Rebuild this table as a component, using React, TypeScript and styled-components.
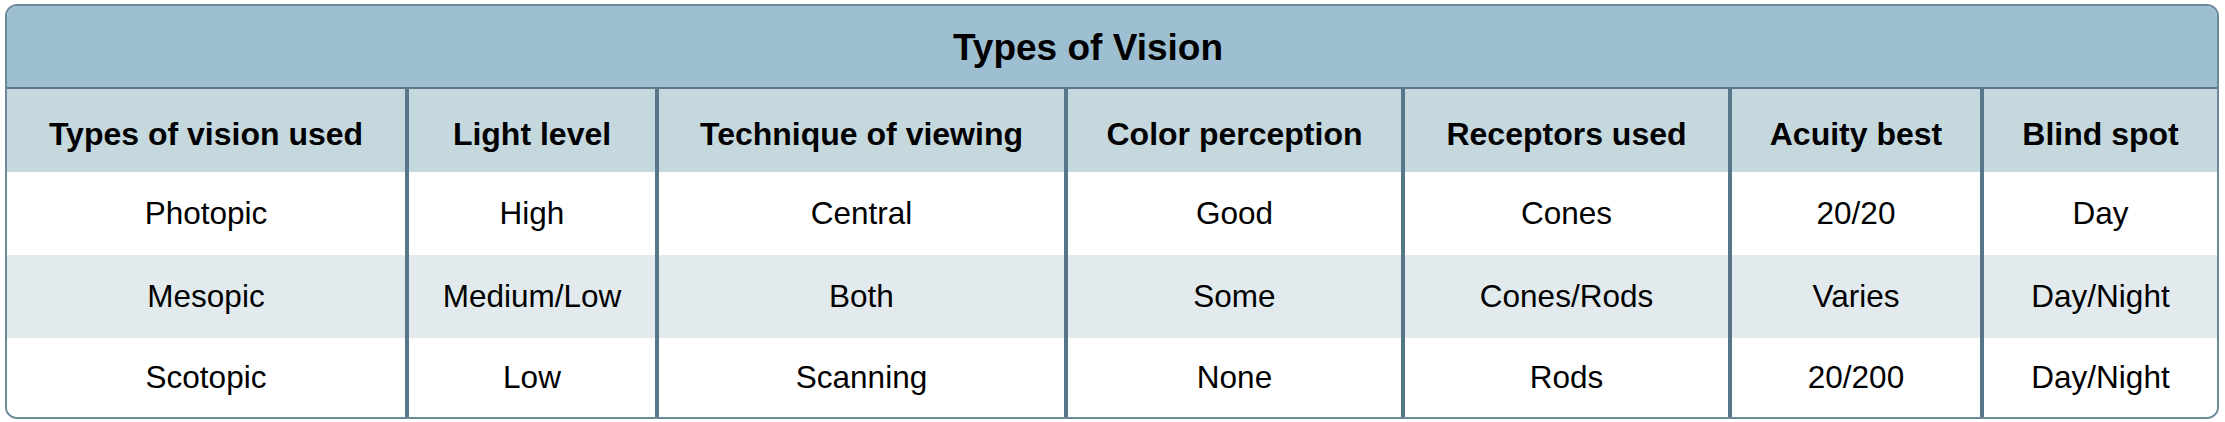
import React from "react";
import styled, { createGlobalStyle } from "styled-components";

const GlobalStyle = createGlobalStyle`
  html, body {
    margin: 0;
    padding: 0;
    background: #ffffff;
  }
  body {
    font-family: "Liberation Sans", Arial, sans-serif;
    color: #000000;
  }
`;

const columns = [
  "Types of vision used",
  "Light level",
  "Technique of viewing",
  "Color perception",
  "Receptors used",
  "Acuity best",
  "Blind spot",
];

const rows = [
  ["Photopic", "High", "Central", "Good", "Cones", "20/20", "Day"],
  ["Mesopic", "Medium/Low", "Both", "Some", "Cones/Rods", "Varies", "Day/Night"],
  ["Scotopic", "Low", "Scanning", "None", "Rods", "20/200", "Day/Night"],
];

const rowHeights = [83, 83, 79];

export default function App() {
  return (
    <>
      <GlobalStyle />
      <Page>
        <Table>
          <Title>Types of Vision</Title>
          <Row $height={83} $bg="#c5d8de">
            {columns.map((c) => (
              <HeadCell key={c}>{c}</HeadCell>
            ))}
          </Row>
          {rows.map((r, i) => (
            <Row key={r[0]} $height={rowHeights[i]} $bg={i % 2 === 1 ? "#e2eaed" : "#ffffff"}>
              {r.map((v, j) => (
                <Cell key={j}>{v}</Cell>
              ))}
            </Row>
          ))}
        </Table>
      </Page>
    </>
  );
}

const Page = styled.div`
  padding: 4px 6px 3px 5px;
`;

const Table = styled.div`
  width: 2214px;
  box-sizing: border-box;
  border: 2px solid #6c8a9a;
  border-radius: 12px;
  overflow: hidden;
`;

const Title = styled.div`
  height: 83px;
  box-sizing: border-box;
  padding: 2px 48px 0 0;
  display: flex;
  align-items: center;
  justify-content: center;
  background: #9dbfd1;
  border-bottom: 2px solid #5b7789;
  font-size: 37px;
  font-weight: bold;
`;

const Row = styled.div<{ $height: number; $bg: string }>`
  display: grid;
  grid-template-columns: 398px 250px 409px 337px 327px 252px 237px;
  height: ${(p) => p.$height}px;
  background: ${(p) => p.$bg};
`;

const Cell = styled.div`
  display: flex;
  align-items: center;
  justify-content: center;
  box-sizing: border-box;
  font-size: 31.5px;
  white-space: nowrap;
  & + & {
    border-left: 4px solid #58768a;
  }
`;

const HeadCell = styled(Cell)`
  font-weight: bold;
  font-size: 32px;
  padding-top: 8px;
`;
